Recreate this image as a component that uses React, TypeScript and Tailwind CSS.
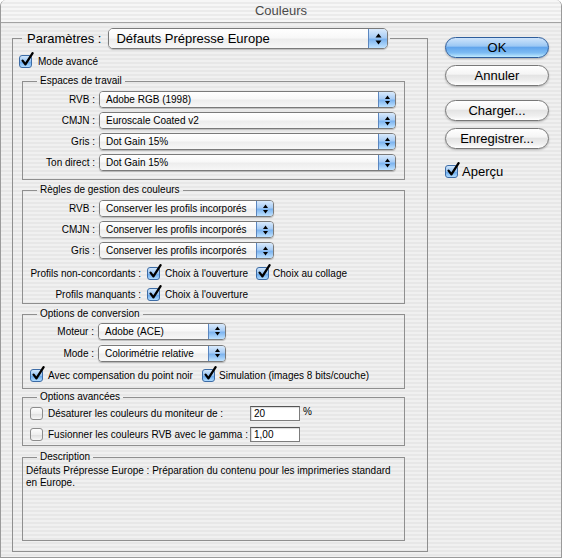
import React from 'react';

const STRIPES =
  "bg-[repeating-linear-gradient(180deg,#f0f0f0_0px,#f0f0f0_2px,#e7e7e7_2px,#e7e7e7_4px)]";

function Arrows({ lg }: { lg?: boolean }) {
  if (lg) {
    return (
      <svg width="7" height="12" viewBox="0 0 7 12">
        <polygon points="0.5,4.5 3.5,0.5 6.5,4.5" fill="#000" />
        <polygon points="0.5,7.5 3.5,11.5 6.5,7.5" fill="#000" />
      </svg>
    );
  }
  return (
    <svg width="5" height="10" viewBox="0 0 5 10">
      <polygon points="0,4 2.5,0.5 5,4" fill="#000" />
      <polygon points="0,6 2.5,9.5 5,6" fill="#000" />
    </svg>
  );
}

function Popup({ text, className, lg }: { text: string; className: string; lg?: boolean }) {
  return (
    <div
      className={`flex shrink-0 overflow-hidden border border-[#7a7a7a] shadow-[0_1px_1px_rgba(0,0,0,0.22)] ${
        lg ? "h-[21px] rounded-[5px]" : "h-[17px] rounded-[4px]"
      } ${className}`}
    >
      <div
        className={`flex flex-1 items-center whitespace-nowrap bg-[linear-gradient(180deg,#ffffff_0%,#f8f8f8_45%,#ededed_55%,#f7f7f7_100%)] ${
          lg ? "pl-[7px] text-[13px]" : "pl-[6px] text-[10px]"
        }`}
      >
        {text}
      </div>
      <div
        className={`flex items-center justify-center border-l border-[#5b86bf] bg-[linear-gradient(180deg,#d9eafc_0%,#a9cdf5_45%,#7db4ef_55%,#bfe2ff_100%)] ${
          lg ? "w-[19px]" : "w-[17px]"
        }`}
      >
        <Arrows lg={lg} />
      </div>
    </div>
  );
}

function Check({ checked }: { checked: boolean }) {
  return (
    <div className="relative h-[13px] w-[13px] shrink-0">
      <div
        className={`h-full w-full rounded-[3px] border ${
          checked
            ? "border-[#3d6ca6] bg-[linear-gradient(180deg,#d0e6fb_0%,#94c2f2_50%,#6aaaee_56%,#b0dcff_100%)]"
            : "border-[#8c8c8c] bg-[linear-gradient(180deg,#fdfdfd_0%,#efefef_50%,#e0e0e0_56%,#f7f7f7_100%)]"
        }`}
      />
      {checked && (
        <svg className="absolute left-[1px] top-[-3px]" width="14" height="15" viewBox="0 0 14 15">
          <path
            d="M2.6 8.6 L5.4 12.4 L12.6 1.2"
            fill="none"
            stroke="#000"
            strokeWidth="2.3"
            strokeLinecap="round"
            strokeLinejoin="round"
          />
        </svg>
      )}
    </div>
  );
}

function AquaButton({ label, primary }: { label: string; primary?: boolean }) {
  return (
    <div
      className={`flex h-[21px] w-[104px] items-center justify-center rounded-full border text-[13px] shadow-[0_1px_2px_rgba(0,0,0,0.25)] ${
        primary
          ? "border-[#2f5e9c] bg-[linear-gradient(180deg,#cfe4fb_0%,#9cc8f4_42%,#62a5ec_50%,#7dbcf3_78%,#c0ebff_100%)]"
          : "border-[#787878] bg-[linear-gradient(180deg,#ffffff_0%,#f5f5f5_42%,#e4e4e4_50%,#efefef_78%,#ffffff_100%)]"
      }`}
    >
      {label}
    </div>
  );
}

function Legend({ children }: { children: React.ReactNode }) {
  return <legend className="ml-[14px] px-[3px] text-[10px] leading-[12px]">{children}</legend>;
}

function Field({ value }: { value: string }) {
  return (
    <div className="flex h-[15px] w-[50px] shrink-0 items-center border border-[#7c7c7c] border-t-[#555] bg-white pl-[3px] text-[10px] shadow-[inset_1px_1px_1px_rgba(0,0,0,0.15)]">
      {value}
    </div>
  );
}

export default function App() {
  return (
    <div
      className={`flex h-[558px] w-[562px] flex-col overflow-hidden rounded-t-[6px] border-x border-b border-[#9a9a9a] font-['Liberation_Sans',Arial,sans-serif] text-black ${STRIPES}`}
    >
      {/* title bar */}
      <div className="flex h-[23px] shrink-0 items-center justify-center border-b border-[#a3a3a3] bg-[repeating-linear-gradient(180deg,#f6f6f6_0px,#f6f6f6_2px,#ebebeb_2px,#ebebeb_4px)] text-[13px] text-[#4a4a4a]">
        Couleurs
      </div>

      <div className="flex">
        {/* main group */}
        <fieldset className="ml-[11px] mt-[5px] h-[524px] w-[416px] shrink-0 border border-[#8f8f8f]">
          <legend className="ml-[9px] pl-[5px] pr-[2px]">
            <div className="flex items-center">
              <span className="text-[13px]">Paramètres :</span>
              <Popup lg className="ml-[7px] w-[280px]" text="Défauts Prépresse Europe" />
            </div>
          </legend>

          <div className="ml-[6px] mt-[6px] flex h-[13px] items-center gap-[6px] text-[10px]">
            <Check checked />
            <span>Mode avancé</span>
          </div>

          {/* Espaces de travail */}
          <fieldset className="ml-[9px] mt-[7px] h-[105px] w-[383px] border border-[#8f8f8f] text-[10px]">
            <Legend>Espaces de travail</Legend>
            <div className="mt-[2px] flex flex-col">
              {[
                ["RVB :", "Adobe RGB (1998)"],
                ["CMJN :", "Euroscale Coated v2"],
                ["Gris :", "Dot Gain 15%"],
                ["Ton direct :", "Dot Gain 15%"],
              ].map(([l, v]) => (
                <div key={l} className="flex h-[21px] items-center">
                  <span className="w-[72px] text-right">{l}</span>
                  <Popup className="ml-[4px] w-[297px]" text={v} />
                </div>
              ))}
            </div>
          </fieldset>

          {/* Règles */}
          <fieldset className="ml-[9px] mt-[4px] h-[120px] w-[383px] border border-[#8f8f8f] text-[10px]">
            <Legend>Règles de gestion des couleurs</Legend>
            <div className="mt-[2px] flex flex-col">
              {["RVB :", "CMJN :", "Gris :"].map((l) => (
                <div key={l} className="flex h-[21px] items-center">
                  <span className="w-[72px] text-right">{l}</span>
                  <Popup className="ml-[4px] w-[175px]" text="Conserver les profils incorporés" />
                </div>
              ))}
              <div className="mt-[2px] flex h-[21px] items-center">
                <span className="w-[118px] text-right">Profils non-concordants :</span>
                <div className="ml-[6px]">
                  <Check checked />
                </div>
                <span className="ml-[5px]">Choix à l'ouverture</span>
                <div className="ml-[8px]">
                  <Check checked />
                </div>
                <span className="ml-[4px]">Choix au collage</span>
              </div>
              <div className="flex h-[21px] items-center">
                <span className="w-[118px] text-right">Profils manquants :</span>
                <div className="ml-[6px]">
                  <Check checked />
                </div>
                <span className="ml-[5px]">Choix à l'ouverture</span>
              </div>
            </div>
          </fieldset>

          {/* Options de conversion */}
          <fieldset className="ml-[9px] mt-[4px] h-[81px] w-[383px] border border-[#8f8f8f] text-[10px]">
            <Legend>Options de conversion</Legend>
            <div className="flex flex-col">
              <div className="flex h-[22px] items-center">
                <span className="w-[71px] text-right">Moteur :</span>
                <Popup className="ml-[4px] w-[128px]" text="Adobe (ACE)" />
              </div>
              <div className="flex h-[22px] items-center">
                <span className="w-[71px] text-right">Mode :</span>
                <Popup className="ml-[4px] w-[128px]" text="Colorimétrie relative" />
              </div>
              <div className="flex h-[22px] items-center pl-[7px]">
                <div className="flex w-[172px] items-center">
                  <Check checked />
                  <span className="ml-[5px]">Avec compensation du point noir</span>
                </div>
                <Check checked />
                <span className="ml-[4px]">Simulation (images 8 bits/couche)</span>
              </div>
            </div>
          </fieldset>

          {/* Options avancées */}
          <fieldset className="ml-[9px] mt-[2px] h-[55px] w-[383px] border border-[#8f8f8f] text-[10px]">
            <Legend>Options avancées</Legend>
            <div className="flex flex-col">
              <div className="flex h-[21px] items-center pl-[7px]">
                <Check checked={false} />
                <span className="ml-[5px] w-[202px]">Désaturer les couleurs du moniteur de :</span>
                <Field value="20" />
                <span className="ml-[3px] self-start pt-[1px]">%</span>
              </div>
              <div className="flex h-[21px] items-center pl-[7px]">
                <Check checked={false} />
                <span className="ml-[5px] w-[202px]">Fusionner les couleurs RVB avec le gamma :</span>
                <Field value="1,00" />
              </div>
            </div>
          </fieldset>

          {/* Description */}
          <fieldset className="ml-[9px] mt-[5px] h-[90px] w-[383px] border border-[#8f8f8f] text-[10px] leading-[12px]">
            <Legend>Description</Legend>
            <div className="mt-[2px] pl-[3px]">
              <div className="whitespace-nowrap">
                Défauts Prépresse Europe : Préparation du contenu pour les imprimeries standard
              </div>
              <div>en Europe.</div>
            </div>
          </fieldset>
        </fieldset>

        {/* right column */}
        <div className="ml-[17px] mt-[14px] flex flex-col">
          <AquaButton label="OK" primary />
          <div className="mt-[7px]">
            <AquaButton label="Annuler" />
          </div>
          <div className="mt-[14px]">
            <AquaButton label="Charger..." />
          </div>
          <div className="mt-[7px]">
            <AquaButton label="Enregistrer..." />
          </div>
          <div className="mt-[16px] flex h-[13px] items-center gap-[4px] text-[13px]">
            <Check checked />
            <span>Aperçu</span>
          </div>
        </div>
      </div>
    </div>
  );
}
